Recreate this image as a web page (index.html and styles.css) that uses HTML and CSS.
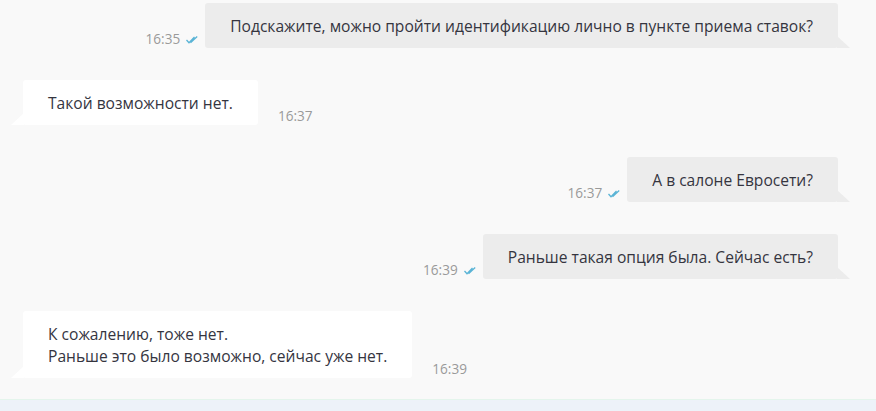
FILE: index.html
```html
<!DOCTYPE html>
<html lang="ru">
<head>
    <meta charset="UTF-8">
    <title>Чат</title>
<link rel="stylesheet" href="styles.css">
</head>
<body>

<div class="chat">
    <div class="msg out">
        <span class="time">16:35</span>
        <svg class="check" width="12" height="8" viewBox="0 0 12 8"><path d="M0.5 4 L3 6.8 L8.5 1 M4.5 6.8 L11.2 0.6" fill="none" stroke="#5ab4d6" stroke-width="1.3"/></svg>
        <div class="bubble">Подскажите, можно пройти идентификацию лично в пункте приема ставок?</div>
    </div>

    <div class="msg in">
        <div class="bubble">Такой возможности нет.</div>
        <span class="time">16:37</span>
    </div>

    <div class="msg out">
        <span class="time">16:37</span>
        <svg class="check" width="12" height="8" viewBox="0 0 12 8"><path d="M0.5 4 L3 6.8 L8.5 1 M4.5 6.8 L11.2 0.6" fill="none" stroke="#5ab4d6" stroke-width="1.3"/></svg>
        <div class="bubble">А в салоне Евросети?</div>
    </div>

    <div class="msg out">
        <span class="time">16:39</span>
        <svg class="check" width="12" height="8" viewBox="0 0 12 8"><path d="M0.5 4 L3 6.8 L8.5 1 M4.5 6.8 L11.2 0.6" fill="none" stroke="#5ab4d6" stroke-width="1.3"/></svg>
        <div class="bubble">Раньше такая опция была. Сейчас есть?</div>
    </div>

    <div class="msg in">
        <div class="bubble">К сожалению, тоже нет.<br>Раньше это было возможно, сейчас уже нет.</div>
        <span class="time">16:39</span>
    </div>
</div>

<div class="footer"></div>

</body>
</html>
```

FILE: styles.css
```css
body {
    margin: 0;
    background-color: #f9f9f9;
    font-family: 'Open Sans', 'Noto Sans', sans-serif;
    color: #35353f;
    font-size: 15.6px;
    height: 411px;
    overflow: hidden;
    display: flex;
    flex-direction: column;
}
.chat {
    flex: 1;
    display: flex;
    flex-direction: column;
    gap: 32px;
    padding: 3px 38px 0 23px;
}
.msg {
    display: flex;
    align-items: flex-end;
}
.msg.out {
    justify-content: flex-end;
}
.bubble {
    position: relative;
    padding: 12px 25px 11px;
    line-height: 22px;
    border-radius: 3px;
}
.out .bubble {
    background: #ececec;
    margin-left: 7px;
}
.in .bubble {
    background: #ffffff;
}
.bubble::after {
    content: "";
    position: absolute;
    bottom: 0;
    width: 13px;
    height: 12px;
}
.out .bubble::after {
    right: -12px;
    background: #ececec;
    clip-path: polygon(0 0, 100% 100%, 0 100%);
}
.in .bubble::after {
    left: -12px;
    background: #ffffff;
    clip-path: polygon(100% 0, 100% 100%, 0 100%);
}
.time {
    font-size: 13.6px;
    line-height: 18px;
    color: #9a9a9a;
}
.in .time {
    margin-left: 20px;
}
.check {
    margin-left: 6px;
    margin-bottom: 4px;
}
.footer {
    height: 11px;
    background: #edf2f9;
    border-top: 1px solid #e4f5ec;
}
```
